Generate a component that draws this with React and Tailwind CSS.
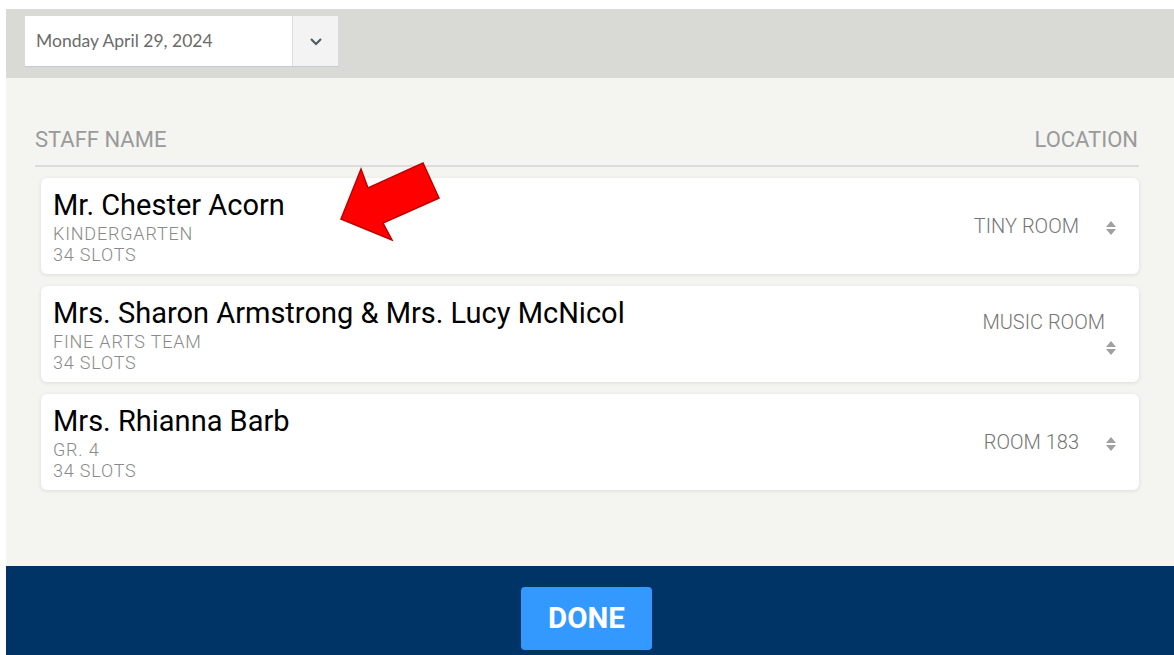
import React from "react";

const staff = [
  { name: "Mr. Chester Acorn", group: "KINDERGARTEN", slots: 34, location: "TINY ROOM" },
  { name: "Mrs. Sharon Armstrong & Mrs. Lucy McNicol", group: "FINE ARTS TEAM", slots: 34, location: "MUSIC ROOM" },
  { name: "Mrs. Rhianna Barb", group: "GR. 4", slots: 34, location: "ROOM 183" },
];

const SortIcon = () => (
  <svg width="12" height="16" viewBox="0 0 12 16" className="inline-block align-middle">
    <path d="M6 1 L11 7 H1 Z" fill="#a0a0a0" />
    <path d="M6 15 L11 9 H1 Z" fill="#a0a0a0" />
  </svg>
);

const Pointer = () => (
  <svg className="absolute left-[330px] top-[155px]" width="120" height="95" viewBox="330 155 120 95">
    <polygon
      points="341,219 361,169 368,188 423,163 439,198 383,223 392,240"
      fill="#ff0000"
      stroke="#c00000"
      strokeWidth="1.5"
      strokeLinejoin="miter"
    />
  </svg>
);

function StaffRow({ person }) {
  return (
    <div className="ml-[6px] flex items-center justify-between rounded-md bg-white pl-[12px] pr-[22px] h-[96px] shadow-[0_1px_4px_rgba(0,0,0,0.1)]">
      <div className="flex flex-col">
        <div className="mt-[1px] text-[29px] leading-[32px] text-black">{person.name}</div>
        <div className="mt-[2px] text-[18px] leading-[21px] tracking-[0.8px] font-light text-[#8a8a8a]">{person.group}</div>
        <div className="text-[18px] leading-[21px] tracking-[0.8px] font-light text-[#8a8a8a]">{person.slots} SLOTS</div>
      </div>
      <div className="w-[150px] pr-[12px] text-right text-[20px] leading-[24px] font-light text-[#757575]">
        {person.location}
        <span className="inline-block ml-[26px] mr-[-12px]">
          <SortIcon />
        </span>
      </div>
    </div>
  );
}

export default function App() {
  return (
    <div className="relative min-h-[655px] bg-white pt-[9px] pl-[6px] font-['Roboto',sans-serif]">
      {/* date picker band */}
      <div className="h-[69px] bg-[#d9d9d5] pl-[19px] pt-[7px]">
        <div className="flex h-[50px] w-[313px] shadow-[0_1px_0_#c3cad3]">
          <div className="flex flex-1 items-center bg-white pl-[11px] font-['Lato',sans-serif] text-[17.5px] text-[#6b6b6b]">
            Monday April 29, 2024
          </div>
          <div className="flex w-[46px] items-center justify-center border-l border-[#dedede] bg-[#f3f3f3]">
            <svg width="14" height="10" viewBox="0 0 14 10">
              <path d="M2 3 L7 8 L12 3" fill="none" stroke="#4d5d68" strokeWidth="2.2" />
            </svg>
          </div>
        </div>
      </div>

      {/* staff list */}
      <div className="h-[488px] bg-[#f4f4f0] pl-[29px] pr-[35px] pt-[50px]">
        <div className="flex justify-between border-b-2 border-[#dcdcda] pb-[13px] pr-[1px] text-[22px] leading-[24px] text-[#9a9a9a]">
          <span>STAFF NAME</span>
          <span>LOCATION</span>
        </div>
        <div className="mt-[11px] flex flex-col gap-[12px]">
          {staff.map((p) => (
            <StaffRow key={p.name} person={p} />
          ))}
        </div>
      </div>

      {/* footer */}
      <div className="flex h-[89px] justify-center bg-[#003366] pr-[7px] pt-[21px]">
        <button className="h-[63px] w-[131px] rounded-[4px] bg-[#3399ff] text-[29.5px] font-bold text-white">
          DONE
        </button>
      </div>

      <Pointer />
    </div>
  );
}
